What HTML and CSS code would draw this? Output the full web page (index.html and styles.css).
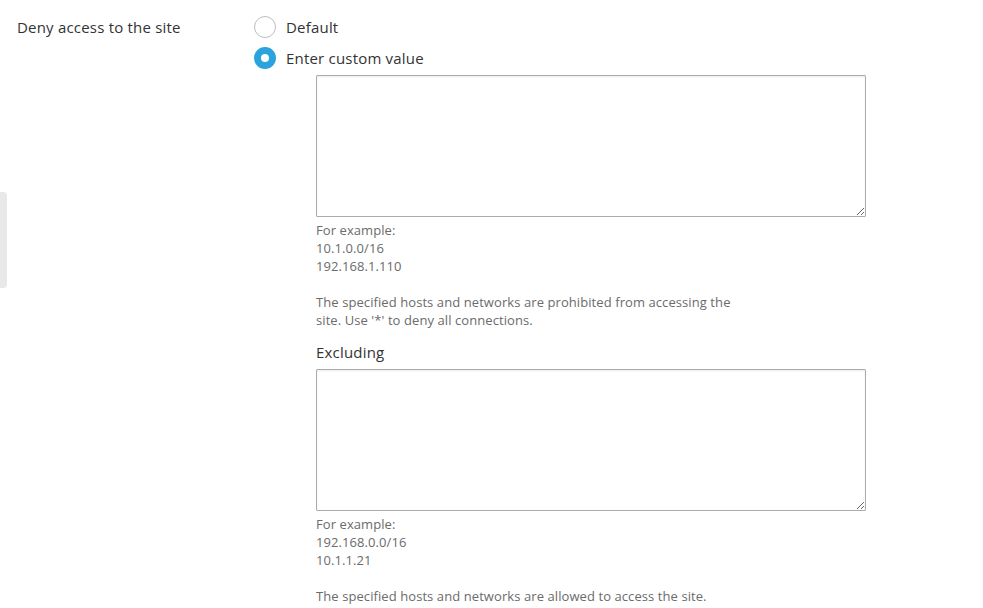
FILE: index.html
```html
<!DOCTYPE html>
<html lang="en">
<head>
<meta charset="utf-8">
<title>Deny access</title>
<link rel="stylesheet" href="styles.css">
</head>
<body>
<div class="side-handle"></div>
<div class="form-row">
  <div class="row-label">Deny access to the site</div>
  <div class="row-field">
    <label class="radio"><span class="radio-dot"></span><span>Default</span></label>
    <label class="radio radio-second"><span class="radio-dot checked"></span><span>Enter custom value</span></label>
    <div class="custom">
      <textarea class="area"></textarea>
      <div class="hint">
        <div>For example:</div>
        <div>10.1.0.0/16</div>
        <div>192.168.1.110</div>
        <div class="hint-gap">The specified hosts and networks are prohibited from accessing the site. Use '*' to deny all connections.</div>
      </div>
      <div class="sub-label">Excluding</div>
      <textarea class="area"></textarea>
      <div class="hint">
        <div>For example:</div>
        <div>192.168.0.0/16</div>
        <div>10.1.1.21</div>
        <div class="hint-gap">The specified hosts and networks are allowed to access the site.</div>
      </div>
    </div>
  </div>
</div>
</body>
</html>
```
FILE: styles.css
```css
html, body {
  margin: 0;
  padding: 0;
  background: #fff;
}
body {
  font-family: "Open Sans", "Liberation Sans", sans-serif;
  color: #333;
  font-size: 15px;
  letter-spacing: 0.2px;
}
.side-handle {
  position: fixed;
  left: 0;
  top: 192px;
  width: 7px;
  height: 96px;
  background: #e8e8e8;
  border-radius: 0 4px 4px 0;
}
.form-row {
  display: flex;
  padding-top: 11px;
}
.row-label {
  width: 254px;
  flex: none;
  padding-left: 17px;
  box-sizing: border-box;
  line-height: 32px;
  color: #333;
}
.row-field {
  display: flex;
  flex-direction: column;
}
.radio {
  display: flex;
  align-items: center;
  height: 32px;
  gap: 10px;
  color: #333;
}
.radio-second {
  margin-top: -1px;
  margin-bottom: 1px;
}
.radio-dot {
  width: 22px;
  height: 22px;
  box-sizing: border-box;
  border: 1px solid #bdbdbd;
  border-radius: 50%;
  background: #fff;
}
.radio-dot.checked {
  border: 7px solid #2ba3dc;
}
.custom {
  margin-left: 62px;
  display: flex;
  flex-direction: column;
}
.area {
  width: 550px;
  height: 142px;
  box-sizing: border-box;
  border: 1px solid #ababab;
  border-radius: 1px;
  box-shadow: inset 0 1px 2px rgba(0,0,0,0.08);
  margin: 0;
  padding: 4px;
  resize: both;
  font-family: inherit;
}
.hint {
  margin-top: 4px;
  font-size: 13px;
  letter-spacing: 0.08px;
  line-height: 18px;
  color: #6b6b6b;
  max-width: 440px;
}
.hint-gap {
  margin-top: 18px;
}
.sub-label {
  margin-top: 13px;
  margin-bottom: 7px;
  line-height: 20px;
  color: #333;
}
```
